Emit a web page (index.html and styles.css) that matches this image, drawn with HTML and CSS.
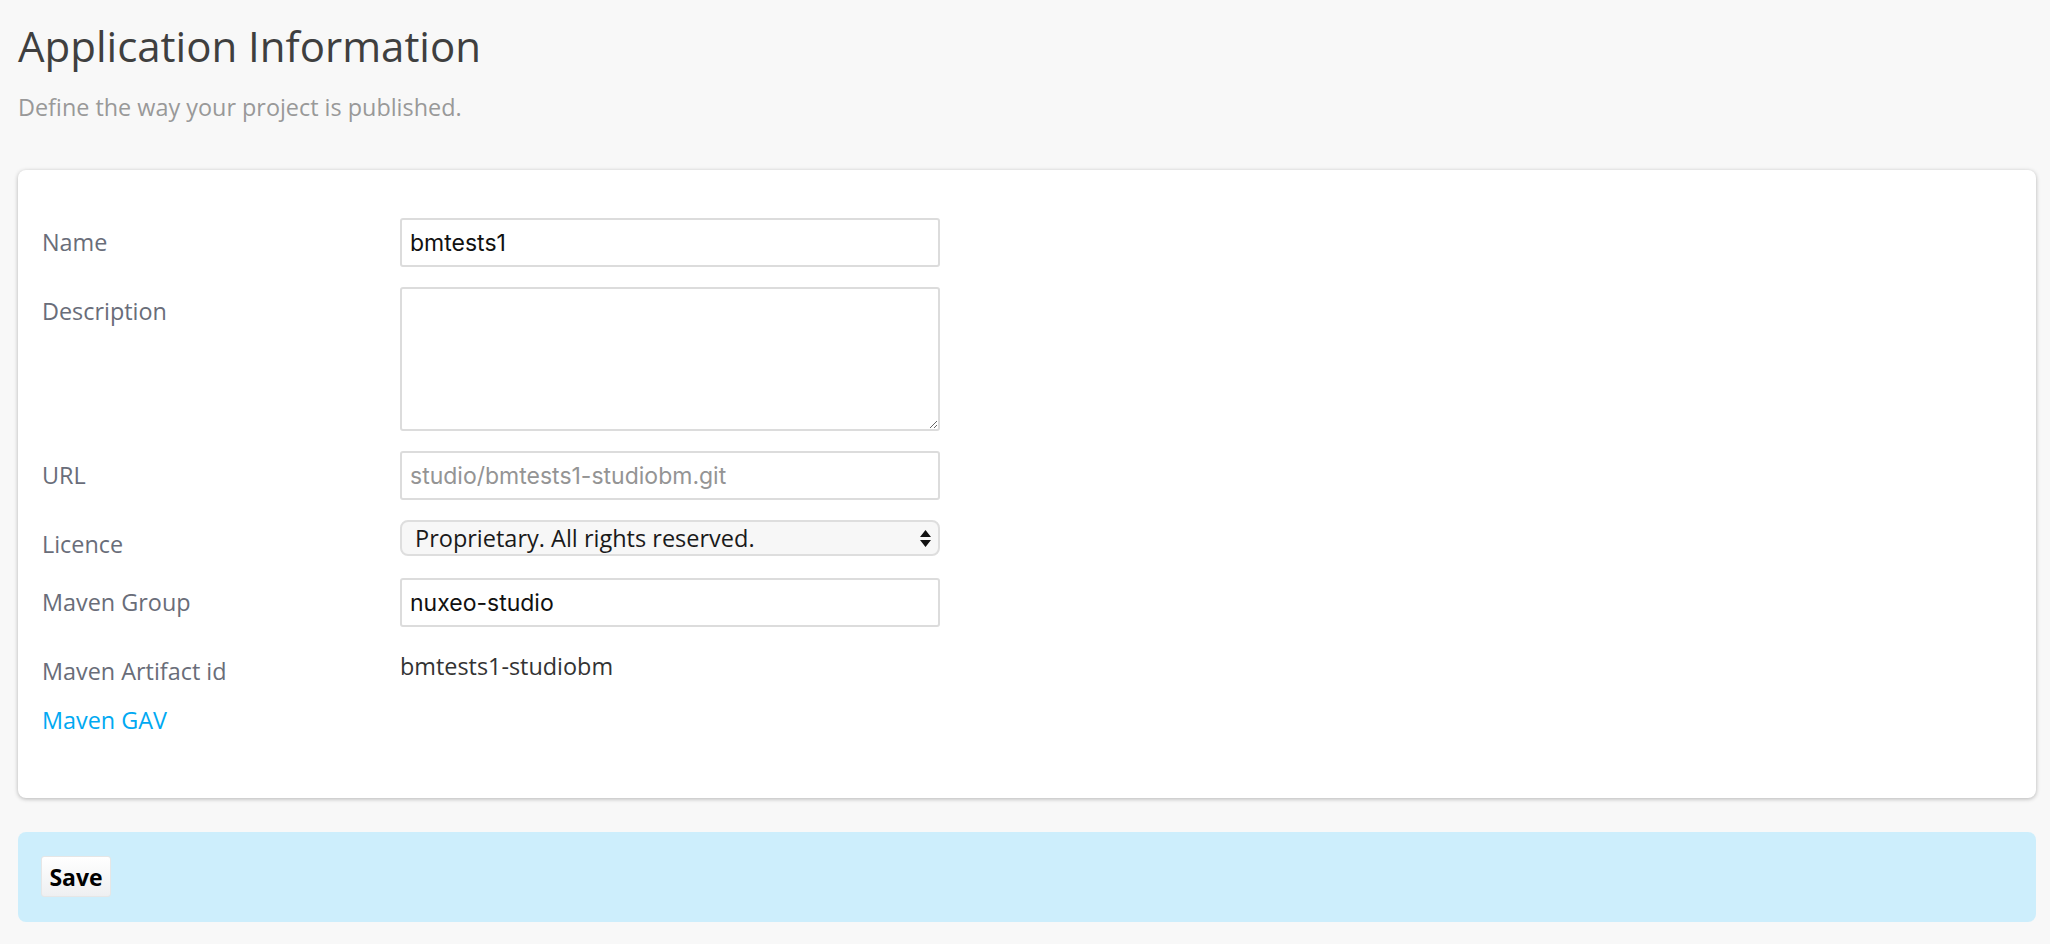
FILE: index.html
```html
<!DOCTYPE html>
<html lang="en">
<head>
<meta charset="utf-8">
<title>Application Information</title>
<link rel="stylesheet" href="styles.css">
</head>
<body>
<div class="page">
  <h1 class="title">Application Information</h1>
  <p class="subtitle">Define the way your project is published.</p>

  <div class="card">
    <div class="form">
      <label class="label">Name</label>
      <div class="field"><input class="input" type="text" value="bmtests1"></div>

      <label class="label">Description</label>
      <div class="field"><textarea class="textarea"></textarea></div>

      <label class="label">URL</label>
      <div class="field"><input class="input" type="text" placeholder="studio/bmtests1-studiobm.git"></div>

      <label class="label">Licence</label>
      <div class="field select-wrap">
        <select class="select">
          <option>Proprietary. All rights reserved.</option>
        </select>
        <svg class="select-arrows" width="11" height="17" viewBox="0 0 11 17"><path d="M5.5 0 L11 7 L0 7 Z M0 10 L11 10 L5.5 17 Z" fill="#111"/></svg>
      </div>

      <label class="label">Maven Group</label>
      <div class="field"><input class="input" type="text" value="nuxeo-studio"></div>

      <label class="label">Maven Artifact id</label>
      <div class="field value">bmtests1-studiobm</div>
    </div>
    <a class="gav" href="#">Maven GAV</a>
  </div>

  <div class="actions">
    <button class="btn" type="button">Save</button>
  </div>
</div>
</body>
</html>
```

FILE: styles.css
```css
* { box-sizing: border-box; }

html, body {
  margin: 0;
  padding: 0;
  background: #f8f8f8;
}

body {
  font-family: "Open Sans", "Liberation Sans", sans-serif;
  color: #333;
}

.page {
  padding: 21px 14px 22px 18px;
}

.title {
  margin: 0;
  font-size: 42px;
  line-height: 50px;
  font-weight: 400;
  color: #3f3f3f;
}

.subtitle {
  margin: 21px 0 0 0;
  font-size: 23.4px;
  line-height: 30px;
  color: #999999;
}

.card {
  margin-top: 48px;
  background: #ffffff;
  border-radius: 8px;
  box-shadow: 0 1px 4px rgba(0, 0, 0, 0.28);
  padding: 48px 24px 64px 24px;
}

.form {
  display: grid;
  grid-template-columns: 358px 540px;
  row-gap: 20px;
  align-items: start;
}

.label {
  font-size: 23.4px;
  line-height: 28px;
  padding-top: 10px;
  color: #696d79;
}

.field {
  min-width: 0;
}

.input {
  display: block;
  width: 540px;
  height: 49px;
  margin: 0;
  padding: 0 8px;
  border: 2px solid #dcdcdc;
  border-radius: 3px;
  background: #fff;
  font-family: "Inter", "Liberation Sans", sans-serif;
  font-size: 23px;
  color: #111;
  outline: none;
}

.input::placeholder {
  color: #949494;
  opacity: 1;
}

.textarea {
  display: block;
  width: 540px;
  height: 144px;
  margin: 0;
  padding: 8px;
  border: 2px solid #dcdcdc;
  border-radius: 3px;
  background: #fff;
  font-family: "Inter", "Liberation Sans", sans-serif;
  font-size: 23px;
  resize: both;
  outline: none;
}

.select-wrap {
  position: relative;
  width: 540px;
}

.select {
  display: block;
  width: 540px;
  height: 36px;
  margin: 0;
  padding: 0 30px 0 13px;
  border: 2px solid #dedede;
  border-radius: 8px;
  background: #f7f7f7;
  font-family: "Open Sans", "Liberation Sans", sans-serif;
  font-size: 23.5px;
  color: #1a1a1a;
  -webkit-appearance: none;
  appearance: none;
  outline: none;
}

.select-arrows {
  position: absolute;
  right: 9px;
  top: 10px;
  pointer-events: none;
}

.value {
  font-size: 23.4px;
  line-height: 28px;
  padding-top: 5px;
  color: #333;
}

.gav {
  display: block;
  margin-top: 21px;
  font-size: 23.4px;
  line-height: 28px;
  color: #00a9f2;
  text-decoration: none;
}

.actions {
  margin-top: 34px;
  height: 90px;
  background: #cdeefc;
  border-radius: 8px;
  padding: 24px 23px;
}

.btn {
  display: block;
  width: 70px;
  height: 41px;
  margin: 0;
  padding: 0;
  border: 1px solid #e6e6e6;
  border-radius: 3px;
  background: linear-gradient(#ffffff, #eeeff1);
  font-family: "Open Sans", "Liberation Sans", sans-serif;
  font-weight: 700;
  font-size: 23px;
  color: #000;
  cursor: pointer;
}
```
